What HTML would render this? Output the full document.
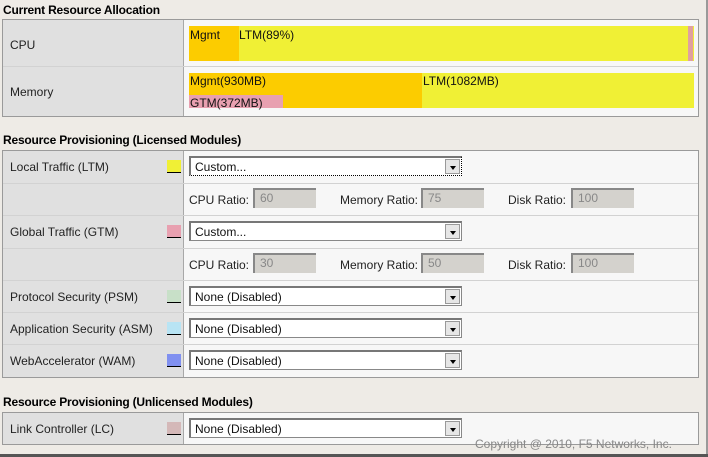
<!DOCTYPE html>
<html><head><style>
*{margin:0;padding:0;box-sizing:border-box}
body{width:708px;height:457px;background:#eeebe6;position:relative;overflow:hidden;font-family:"Liberation Sans",Arial,sans-serif;font-size:12px;color:#111}
.a{position:absolute}
.h{font-weight:bold;font-size:12px;color:#000;letter-spacing:-0.2px}
.tbl{position:absolute;left:2px;width:697px;border:1px solid #9a9a9a;background:#f7f7f7}
.lc{position:absolute;left:0;width:181px;background:#e0e0e0;border-right:1px solid #a8a8a8}
.row{position:absolute;left:0;right:0;border-top:1px solid #d2d2d2}
.lbl{position:absolute;left:7px;font-size:12px;color:#222}
.sw{position:absolute;left:164px;width:14px;height:13px;border-bottom:1px solid #000}
.sel{position:absolute;left:186px;width:273px;height:20px;background:#fff;border:1px solid #888;border-top:2px solid #777;border-left:2px solid #777}
.sel span{position:absolute;left:4px;top:2px;font-size:12px}
.sel i{position:absolute;right:1px;top:1px;width:15px;height:15px;background:#e6e6e6;border:1px solid #999}
.sel i:after{content:"";position:absolute;left:4px;top:6px;border-left:3px solid transparent;border-right:3px solid transparent;border-top:4px solid #000}
.inp{position:absolute;width:63px;height:20px;background:#d4d2cd;border-top:2px solid #888;border-left:2px solid #888;color:#888;font-size:12px;padding:1px 0 0 5px}
.rl{position:absolute;font-size:12px;color:#222}
</style></head><body>
<div class="a" style="left:706px;top:0;width:2px;height:457px;background:#999"></div>
<div class="a h" style="left:3px;top:3px">Current Resource Allocation</div>
<div class="tbl" style="top:19px;height:98px">
 <div class="lc" style="top:0;height:96px"></div>
 <div class="lbl" style="top:18px">CPU</div>
 <div class="row" style="top:46px"></div>
 <div class="lbl" style="top:65px">Memory</div>
 <div class="a" style="left:186px;top:6px;width:505px;height:35px;background:#f0f035"></div>
 <div class="a" style="left:186px;top:6px;width:50px;height:35px;background:#fccc00"></div>
 <div class="a" style="left:685px;top:6px;width:5px;height:35px;background:#e0a0a0"></div>
 <div class="a" style="left:187px;top:8px">Mgmt</div>
 <div class="a" style="left:236px;top:8px">LTM(89%)</div>
 <div class="a" style="left:186px;top:53px;width:505px;height:35px;background:#f0f035"></div>
 <div class="a" style="left:186px;top:53px;width:233px;height:35px;background:#fccc00"></div>
 <div class="a" style="left:186px;top:75px;width:94px;height:13px;background:#e8a0b0"></div>
 <div class="a" style="left:187px;top:54px">Mgmt(930MB)</div>
 <div class="a" style="left:420px;top:54px">LTM(1082MB)</div>
 <div class="a" style="left:187px;top:76px">GTM(372MB)</div>
</div>
<div class="a h" style="left:3px;top:133px">Resource Provisioning (Licensed Modules)</div>
<div class="tbl" style="top:150px;height:228px">
 <div class="lc" style="top:0;height:226px"></div>
 <div class="row" style="top:32px"></div><div class="row" style="top:64px"></div><div class="row" style="top:97px"></div><div class="row" style="top:129px"></div><div class="row" style="top:161px"></div><div class="row" style="top:193px"></div>
 <div class="lbl" style="top:9px">Local Traffic (LTM)</div><div class="sw" style="top:9px;background:#f0f035"></div>
 <div class="sel" style="top:5px;border:1px dotted #000;border-top:2px solid #777;border-left:2px solid #777"><span>Custom...</span><i></i></div>
 <div class="rl" style="left:186px;top:42px">CPU Ratio:</div><div class="inp" style="left:250px;top:37px">60</div>
 <div class="rl" style="left:337px;top:42px">Memory Ratio:</div><div class="inp" style="left:418px;top:37px">75</div>
 <div class="rl" style="left:505px;top:42px">Disk Ratio:</div><div class="inp" style="left:568px;top:37px">100</div>
 <div class="lbl" style="top:74px">Global Traffic (GTM)</div><div class="sw" style="top:74px;background:#e8a0b0"></div>
 <div class="sel" style="top:70px"><span>Custom...</span><i></i></div>
 <div class="rl" style="left:186px;top:107px">CPU Ratio:</div><div class="inp" style="left:250px;top:102px">30</div>
 <div class="rl" style="left:337px;top:107px">Memory Ratio:</div><div class="inp" style="left:418px;top:102px">50</div>
 <div class="rl" style="left:505px;top:107px">Disk Ratio:</div><div class="inp" style="left:568px;top:102px">100</div>
 <div class="lbl" style="top:139px">Protocol Security (PSM)</div><div class="sw" style="top:139px;background:#c8e0c8"></div>
 <div class="sel" style="top:135px"><span>None (Disabled)</span><i></i></div>
 <div class="lbl" style="top:171px">Application Security (ASM)</div><div class="sw" style="top:171px;background:#b8e4f4"></div>
 <div class="sel" style="top:167px"><span>None (Disabled)</span><i></i></div>
 <div class="lbl" style="top:203px">WebAccelerator (WAM)</div><div class="sw" style="top:203px;background:#8090f0"></div>
 <div class="sel" style="top:199px"><span>None (Disabled)</span><i></i></div>
</div>
<div class="a h" style="left:3px;top:395px">Resource Provisioning (Unlicensed Modules)</div>
<div class="tbl" style="top:412px;height:33px">
 <div class="lc" style="top:0;height:31px"></div>
 <div class="lbl" style="top:9px">Link Controller (LC)</div><div class="sw" style="top:9px;background:#d4b8b8"></div>
 <div class="sel" style="top:5px"><span>None (Disabled)</span><i></i></div>
</div>
<div class="a" style="left:475px;top:437px;font-size:12px;color:#888">Copyright @ 2010, F5 Networks, Inc.</div>
<div class="a" style="left:0;top:454px;width:708px;height:3px;background:#555"></div>
</body></html>
